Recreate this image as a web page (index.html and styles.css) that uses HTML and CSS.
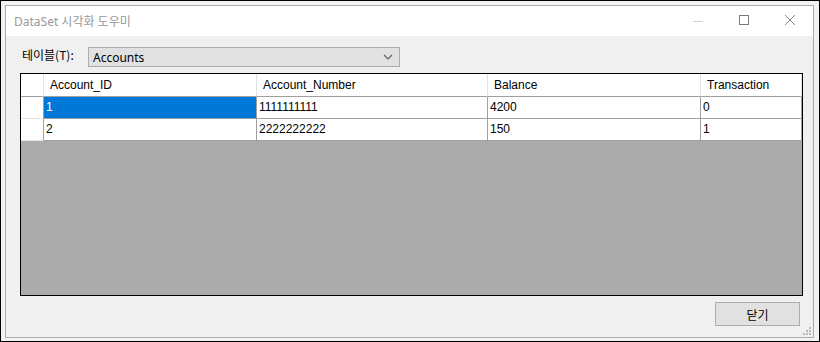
FILE: index.html
```html
<!DOCTYPE html>
<html>
  <head>
    <meta charset="utf8" />
    <title>DataSet 시각화 도우미</title>
    <link rel="stylesheet" href="styles.css">
  </head>
  <body>
    <div class="screen">
      <div class="window">
        <div class="titlebar">
          <span class="caption">DataSet 시각화 도우미</span>
          <div class="caption-buttons">
            <span class="cbtn">
              <svg width="46" height="30" viewBox="0 0 46 30"><path d="M18 15.5h10" stroke="#cfcfcf" stroke-width="1"/></svg>
            </span>
            <span class="cbtn">
              <svg width="46" height="30" viewBox="0 0 46 30"><rect x="18.5" y="9.5" width="9" height="9" fill="none" stroke="#7a7a7a"/></svg>
            </span>
            <span class="cbtn">
              <svg width="46" height="30" viewBox="0 0 46 30"><path d="M18 9l10 10M28 9l-10 10" stroke="#8a8a8a" stroke-width="1"/></svg>
            </span>
          </div>
        </div>
        <div class="content">
          <div class="toolrow">
            <label class="tlabel">테이블(T):</label>
            <div class="combo">
              <span>Accounts</span>
              <svg class="chev" width="10" height="6" viewBox="0 0 10 6"><path d="M1 1l4 4 4-4" fill="none" stroke="#606060" stroke-width="1.2"/></svg>
            </div>
          </div>
          <div class="grid">
            <div class="row head">
              <div class="cell rh"></div>
              <div class="cell c1">Account_ID</div>
              <div class="cell c2">Account_Number</div>
              <div class="cell c3">Balance</div>
              <div class="cell c4">Transaction</div>
            </div>
            <div class="row">
              <div class="cell rh"></div>
              <div class="cell c1 selected">1</div>
              <div class="cell c2">1111111111</div>
              <div class="cell c3">4200</div>
              <div class="cell c4">0</div>
            </div>
            <div class="row">
              <div class="cell rh"></div>
              <div class="cell c1">2</div>
              <div class="cell c2">2222222222</div>
              <div class="cell c3">150</div>
              <div class="cell c4">1</div>
            </div>
          </div>
          <div class="footer">
            <button class="close">닫기</button>
          </div>
        </div>
        <div class="grip">
          <i style="left:6px;top:0"></i>
          <i style="left:3px;top:3px"></i><i style="left:6px;top:3px"></i>
          <i style="left:0;top:6px"></i><i style="left:3px;top:6px"></i><i style="left:6px;top:6px"></i>
        </div>
      </div>
    </div>
  </body>
</html>
```

FILE: styles.css
```css
html, body {
  margin: 0;
  padding: 0;
}

.screen {
  width: 820px;
  height: 342px;
  box-sizing: border-box;
  border: 1px solid #000;
  padding: 4px 5px 3px 4px;
  background: #f2f2f2;
}

.window {
  position: relative;
  height: 100%;
  box-sizing: border-box;
  border: 1px solid #ababab;
  display: flex;
  flex-direction: column;
}

.titlebar {
  height: 30px;
  background: #fff;
  display: flex;
  align-items: center;
  padding-left: 8px;
}
.caption {
  flex: 1;
  font-family: "Noto Sans", "Noto Sans CJK KR", sans-serif;
  font-size: 12px;
  color: #999;
}
.caption-buttons {
  display: flex;
}
.cbtn svg {
  display: block;
}

.content {
  flex: 1;
  background: #f0f0f0;
  padding: 11px 0 0 14px;
  display: flex;
  flex-direction: column;
}

.toolrow {
  display: flex;
  align-items: center;
  height: 20px;
}
.tlabel {
  font-family: "Noto Sans CJK KR", sans-serif;
  font-size: 12px;
  color: #000;
  margin-left: 2px;
  width: 66px;
  margin-top: -5px;
}
.combo {
  width: 312px;
  height: 20px;
  box-sizing: border-box;
  border: 1px solid #adadad;
  background: #e1e1e1;
  display: flex;
  align-items: center;
  justify-content: space-between;
  padding: 0 6px 0 4px;
  font-family: "Noto Sans", sans-serif;
  font-size: 12px;
}

.grid {
  margin-top: 6px;
  width: 783px;
  height: 223px;
  box-sizing: border-box;
  border: 1px solid #000;
  background: #ababab;
}
.row {
  display: flex;
  height: 22px;
  background: #fff;
}
.row.head {
  height: 23px;
}
.cell {
  box-sizing: border-box;
  border-right: 1px solid #a0a0a0;
  border-bottom: 1px solid #a0a0a0;
  font-family: "Liberation Sans", sans-serif;
  font-size: 12px;
  line-height: 21px;
  padding-left: 2px;
  white-space: nowrap;
  overflow: hidden;
}
.head .cell {
  border-right-color: #e3e3e3;
  padding-left: 6px;
  line-height: 22px;
}
.cell.rh {
  width: 23px;
  border-bottom-color: #e3e3e3;
}
.head .cell.rh {
  border-bottom-color: #a0a0a0;
}
.c1 { width: 213px; }
.c2 { width: 231px; }
.c3 { width: 213px; }
.c4 { width: 101px; }
.cell.selected {
  background: #0078d7;
  color: #fff;
}

.footer {
  display: flex;
  justify-content: flex-end;
  padding: 6px 13px 0 0;
}
.close {
  width: 85px;
  height: 24px;
  margin: 0;
  border: 1px solid #adadad;
  background: #e1e1e1;
  font-family: "Noto Sans CJK KR", sans-serif;
  font-size: 12px;
  color: #000;
  padding: 0;
}

.grip {
  position: absolute;
  right: 2px;
  bottom: 2px;
  width: 8px;
  height: 8px;
}
.grip i {
  position: absolute;
  width: 2px;
  height: 2px;
  background: #b8b8b8;
}
```
